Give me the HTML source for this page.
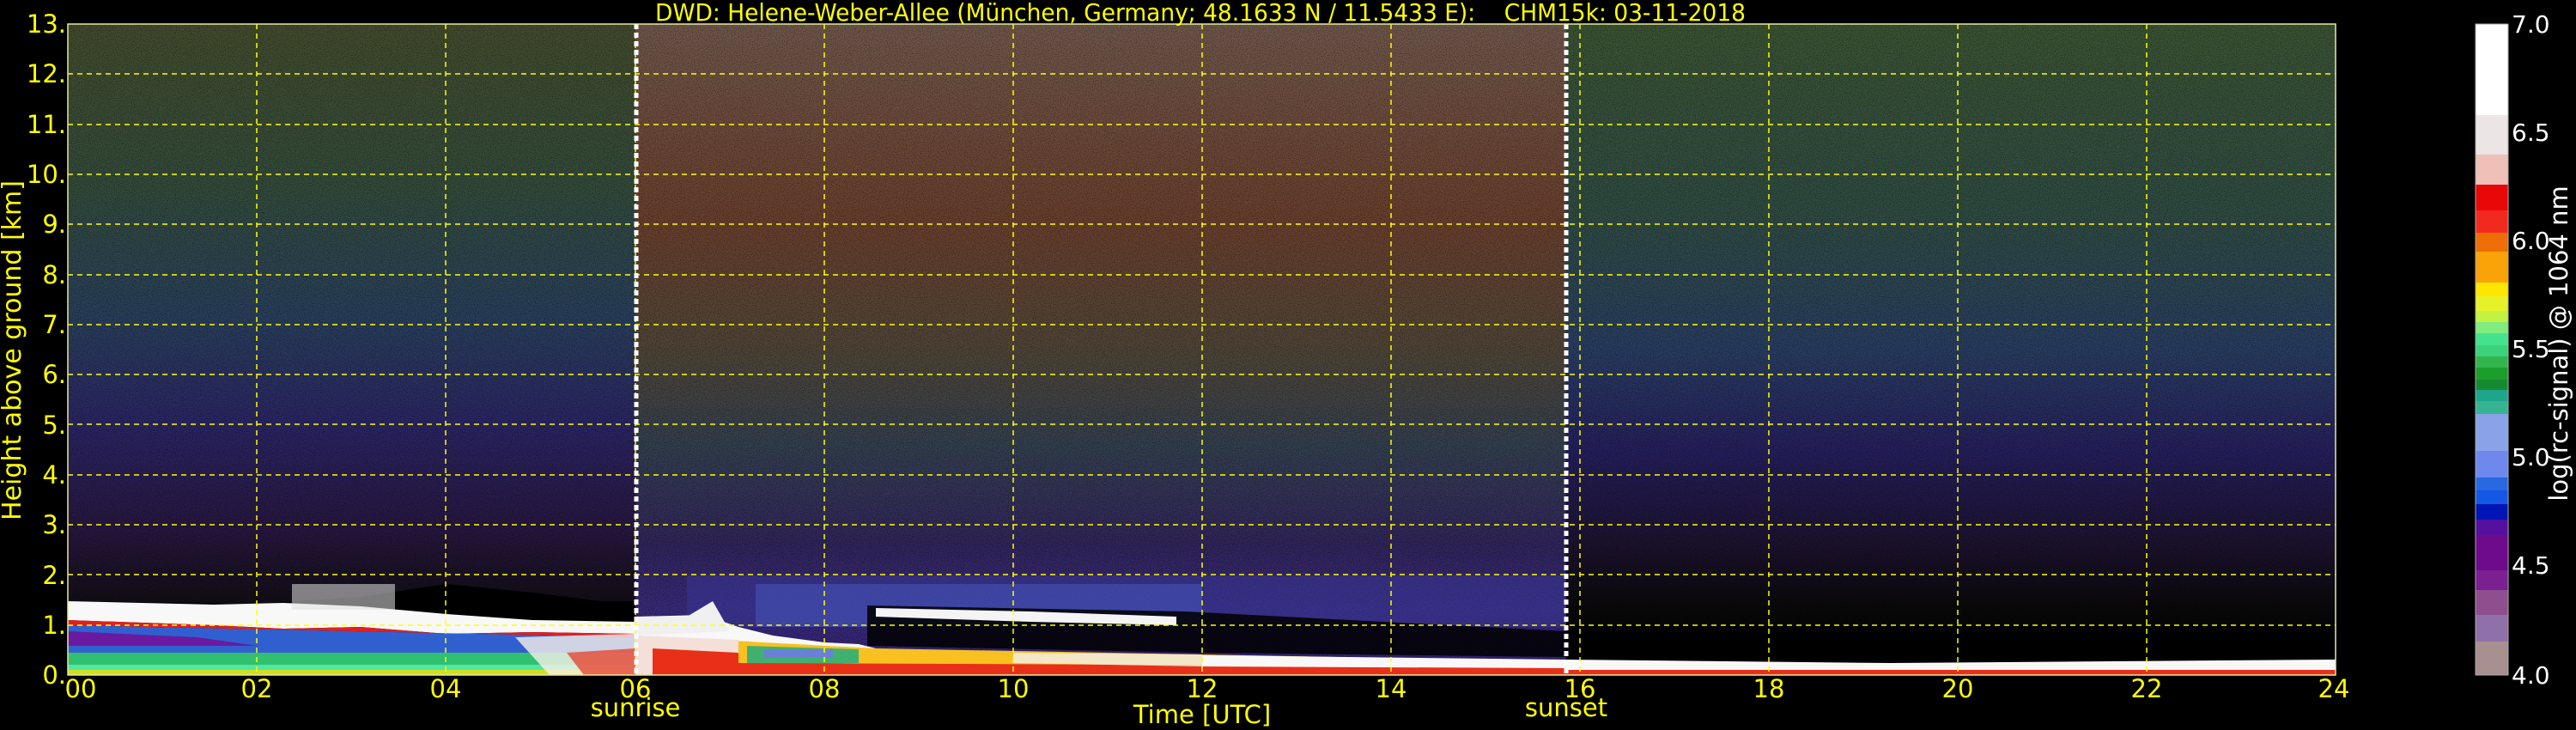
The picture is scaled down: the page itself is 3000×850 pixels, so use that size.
<!DOCTYPE html>
<html><head><meta charset="utf-8"><style>
html,body{margin:0;padding:0;background:#000;}
svg{display:block}
text{font-family:"DejaVu Sans","Liberation Sans",sans-serif;white-space:pre;}
</style></head><body>
<svg width="3000" height="850" viewBox="0 0 3000 850" xmlns="http://www.w3.org/2000/svg">
<defs>
<linearGradient id="night" x1="0" y1="0" x2="0" y2="1">
<stop offset="0" stop-color="#424a2c"/>
<stop offset="0.25" stop-color="#324a3a"/>
<stop offset="0.45" stop-color="#283e5a"/>
<stop offset="0.62" stop-color="#2a2462"/>
<stop offset="0.78" stop-color="#26163e"/>
<stop offset="0.88" stop-color="#140e18"/>
<stop offset="1" stop-color="#050505"/>
</linearGradient>
<linearGradient id="day" x1="0" y1="0" x2="0" y2="1">
<stop offset="0" stop-color="#6e564a"/>
<stop offset="0.3" stop-color="#683e2c"/>
<stop offset="0.5" stop-color="#4e4436"/>
<stop offset="0.65" stop-color="#323e4e"/>
<stop offset="0.8" stop-color="#30245a"/>
<stop offset="0.9" stop-color="#382a78"/>
<stop offset="1" stop-color="#302070"/>
</linearGradient>
<linearGradient id="eve" x1="0" y1="0" x2="0" y2="1">
<stop offset="0" stop-color="#3a5232"/>
<stop offset="0.3" stop-color="#2e4a42"/>
<stop offset="0.5" stop-color="#283c60"/>
<stop offset="0.66" stop-color="#241e5a"/>
<stop offset="0.8" stop-color="#1c122e"/>
<stop offset="0.9" stop-color="#080808"/>
<stop offset="1" stop-color="#000"/>
</linearGradient>
<filter id="noise" x="0" y="0" width="100%" height="100%">
<feTurbulence type="fractalNoise" baseFrequency="0.9" numOctaves="1" seed="3"/>
<feColorMatrix values="0 0 0 0 0  0 0 0 0 0  0 0 0 0 0  0 0 0 -2.2 1.2"/>
</filter>
</defs>
<rect width="3000" height="850" fill="#000"/>
<rect x="79" y="28" width="661" height="758" fill="url(#night)"/>
<rect x="740" y="28" width="1084" height="758" fill="url(#day)"/>
<rect x="1824" y="28" width="896" height="758" fill="url(#eve)"/>
<rect x="79" y="28" width="2641" height="758" filter="url(#noise)" opacity="0.6"/>

<!-- day haze -->
<rect x="800" y="670" width="1024" height="60" fill="#3a3aa0" opacity="0.45"/>
<rect x="880" y="680" width="520" height="50" fill="#4a60c8" opacity="0.45"/>

<!-- night boundary layer -->
<polygon points="79,700 300,703 420,695 520,680 620,690 700,700 740,700 740,735 79,735" fill="#000"/>
<polygon points="79,700 250,704 330,702 420,706 520,715 620,722 740,724 740,738 620,736 520,738 420,730 330,732 250,728 79,722" fill="#f8f8f8"/>
<rect x="340" y="680" width="120" height="30" fill="#e0e0e0" opacity="0.55"/>
<polygon points="79,722 250,728 330,732 420,730 520,738 620,736 740,738 740,742 79,728" fill="#e02020"/>
<polygon points="79,728 740,742 740,760 79,760" fill="#3060d0"/>
<polygon points="79,735 230,742 300,752 79,752" fill="#6a1aa0"/>
<rect x="79" y="760" width="661" height="20" fill="#30c070"/>
<rect x="79" y="774" width="661" height="6" fill="#50e8a0"/>
<rect x="79" y="780" width="661" height="6" fill="#d0e020"/>
<polygon points="600,742 740,738 740,786 640,786" fill="#f8f0e8" opacity="0.8"/>
<polygon points="660,760 740,755 740,786 680,786" fill="#e83020" opacity="0.7"/>

<!-- day boundary layer -->
<polygon points="740,718 820,716 860,730 900,740 960,748 1000,750 1020,755 740,786" fill="#f8f8f8"/>
<polygon points="740,718 800,718 830,700 850,735 740,740" fill="#f0f0f0"/>
<polygon points="740,740 1020,755 1824,770 1824,786 740,786" fill="#f8c020"/>
<polygon points="740,740 860,745 860,786 740,786" fill="#f4e0d8"/>
<polygon points="760,755 860,760 860,786 760,786" fill="#e83018"/>
<polygon points="870,752 1000,756 1000,772 870,774" fill="#40b070"/>
<rect x="890" y="756" width="80" height="10" fill="#6a80d8"/>
<polygon points="860,772 1824,776 1824,786 860,786" fill="#e83018"/>
<!-- black gap and cloud -->
<polygon points="1010,705 1380,712 1824,735 1824,765 1400,760 1010,752" fill="#000" opacity="0.85"/>
<polygon points="1020,708 1200,712 1370,718 1370,728 1200,724 1020,718" fill="#f4f4f4"/>
<polygon points="1400,763 1824,768 1824,778 1400,776" fill="#f8f8f8"/>
<polygon points="1180,760 1400,762 1400,776 1180,772" fill="#f0f0f0" opacity="0.8"/>
<!-- evening -->
<rect x="1824" y="728" width="896" height="42" fill="#000"/>
<polygon points="1824,768 2200,772 2720,768 2720,780 1824,780" fill="#f8f8f8"/>
<rect x="1824" y="780" width="896" height="6" fill="#e83018"/>

<!-- grid -->
<g stroke="#ffff00" stroke-width="1.5" stroke-dasharray="6,5" fill="none">
<line x1="79" y1="728" x2="2720" y2="728"/><line x1="79" y1="669" x2="2720" y2="669"/>
<line x1="79" y1="611" x2="2720" y2="611"/><line x1="79" y1="553" x2="2720" y2="553"/>
<line x1="79" y1="494" x2="2720" y2="494"/><line x1="79" y1="436" x2="2720" y2="436"/>
<line x1="79" y1="378" x2="2720" y2="378"/><line x1="79" y1="320" x2="2720" y2="320"/>
<line x1="79" y1="261" x2="2720" y2="261"/><line x1="79" y1="203" x2="2720" y2="203"/>
<line x1="79" y1="145" x2="2720" y2="145"/><line x1="79" y1="86" x2="2720" y2="86"/>
<line x1="299" y1="28" x2="299" y2="786"/><line x1="519" y1="28" x2="519" y2="786"/>
<line x1="740" y1="28" x2="740" y2="786"/><line x1="960" y1="28" x2="960" y2="786"/>
<line x1="1180" y1="28" x2="1180" y2="786"/><line x1="1400" y1="28" x2="1400" y2="786"/>
<line x1="1620" y1="28" x2="1620" y2="786"/><line x1="1840" y1="28" x2="1840" y2="786"/>
<line x1="2060" y1="28" x2="2060" y2="786"/><line x1="2280" y1="28" x2="2280" y2="786"/>
<line x1="2500" y1="28" x2="2500" y2="786"/>
</g>
<g stroke="#fff" stroke-width="5" stroke-dasharray="6,4">
<line x1="741" y1="28" x2="741" y2="786"/><line x1="1824" y1="28" x2="1824" y2="786"/>
</g>
<rect x="79" y="28" width="2641" height="758" fill="none" stroke="#e8e8a0" stroke-width="1.5"/>

<!-- colorbar -->
<g>
<rect x="2883" y="28" width="38" height="106" fill="#ffffff"/>
<rect x="2883" y="134" width="38" height="46" fill="#ebe5e5"/>
<rect x="2883" y="180" width="38" height="35" fill="#eec0b8"/>
<rect x="2883" y="215" width="38" height="30" fill="#e80808"/>
<rect x="2883" y="245" width="38" height="26" fill="#f22a1e"/>
<rect x="2883" y="271" width="38" height="22" fill="#ee6e08"/>
<rect x="2883" y="293" width="38" height="36" fill="#f9a308"/>
<rect x="2883" y="329" width="38" height="16" fill="#ffe600"/>
<rect x="2883" y="345" width="38" height="17" fill="#e5f22a"/>
<rect x="2883" y="362" width="38" height="13" fill="#c3f242"/>
<rect x="2883" y="375" width="38" height="13" fill="#80ec80"/>
<rect x="2883" y="388" width="38" height="14" fill="#45e28d"/>
<rect x="2883" y="402" width="38" height="13" fill="#3bd27b"/>
<rect x="2883" y="415" width="38" height="13" fill="#33b54d"/>
<rect x="2883" y="428" width="38" height="14" fill="#1c9e2c"/>
<rect x="2883" y="442" width="38" height="12" fill="#168a30"/>
<rect x="2883" y="454" width="38" height="13" fill="#1fa58c"/>
<rect x="2883" y="467" width="38" height="15" fill="#36b491"/>
<rect x="2883" y="482" width="38" height="43" fill="#8aa3e8"/>
<rect x="2883" y="525" width="38" height="31" fill="#6f88ee"/>
<rect x="2883" y="556" width="38" height="15" fill="#2868e0"/>
<rect x="2883" y="571" width="38" height="16" fill="#1558e5"/>
<rect x="2883" y="587" width="38" height="18" fill="#0015b5"/>
<rect x="2883" y="605" width="38" height="18" fill="#5510a0"/>
<rect x="2883" y="623" width="38" height="41" fill="#6e0a8c"/>
<rect x="2883" y="664" width="38" height="23" fill="#7a2090"/>
<rect x="2883" y="687" width="38" height="29" fill="#8f4e8e"/>
<rect x="2883" y="716" width="38" height="31" fill="#9070a8"/>
<rect x="2883" y="747" width="38" height="39" fill="#a89090"/>
<rect x="2883" y="28" width="38" height="758" fill="none" stroke="#aaa" stroke-width="1"/>
</g>
<g fill="#fff" font-size="28">
<text x="2925" y="38">7.0</text><text x="2925" y="164">6.5</text>
<text x="2925" y="290">6.0</text><text x="2925" y="416">5.5</text>
<text x="2925" y="542">5.0</text><text x="2925" y="668">4.5</text>
<text x="2925" y="796">4.0</text>
</g>
<text transform="translate(2990,400) rotate(-90)" text-anchor="middle" fill="#fff" font-size="29">log(rc-signal) @ 1064 nm</text>

<g fill="#ffff00" font-size="29" text-anchor="end">
<text x="77" y="38">13.</text><text x="77" y="96">12.</text><text x="77" y="155">11.</text>
<text x="77" y="213">10.</text><text x="77" y="271">9.</text><text x="77" y="330">8.</text>
<text x="77" y="388">7.</text><text x="77" y="446">6.</text><text x="77" y="505">5.</text>
<text x="77" y="563">4.</text><text x="77" y="621">3.</text><text x="77" y="680">2.</text>
<text x="77" y="738">1.</text><text x="77" y="796">0.</text>
</g>
<g fill="#ffff00" font-size="29" text-anchor="middle">
<text x="94" y="812">00</text><text x="299" y="812">02</text><text x="519" y="812">04</text>
<text x="740" y="812">06</text><text x="960" y="812">08</text><text x="1180" y="812">10</text>
<text x="1400" y="812">12</text><text x="1620" y="812">14</text><text x="1840" y="812">16</text>
<text x="2060" y="812">18</text><text x="2280" y="812">20</text><text x="2500" y="812">22</text>
<text x="2718" y="812">24</text>
<text x="740" y="834">sunrise</text><text x="1824" y="834">sunset</text>
<text x="1400" y="842">Time [UTC]</text>
</g>
<text x="763" y="24" fill="#ffff00" font-size="28" textLength="1270" lengthAdjust="spacingAndGlyphs" xml:space="preserve">DWD: Helene-Weber-Allee (München, Germany; 48.1633 N / 11.5433 E):    CHM15k: 03-11-2018</text>
<text transform="translate(24,408) rotate(-90)" text-anchor="middle" fill="#ffff00" font-size="30">Height above ground [km]</text>
</svg>
</body></html>
